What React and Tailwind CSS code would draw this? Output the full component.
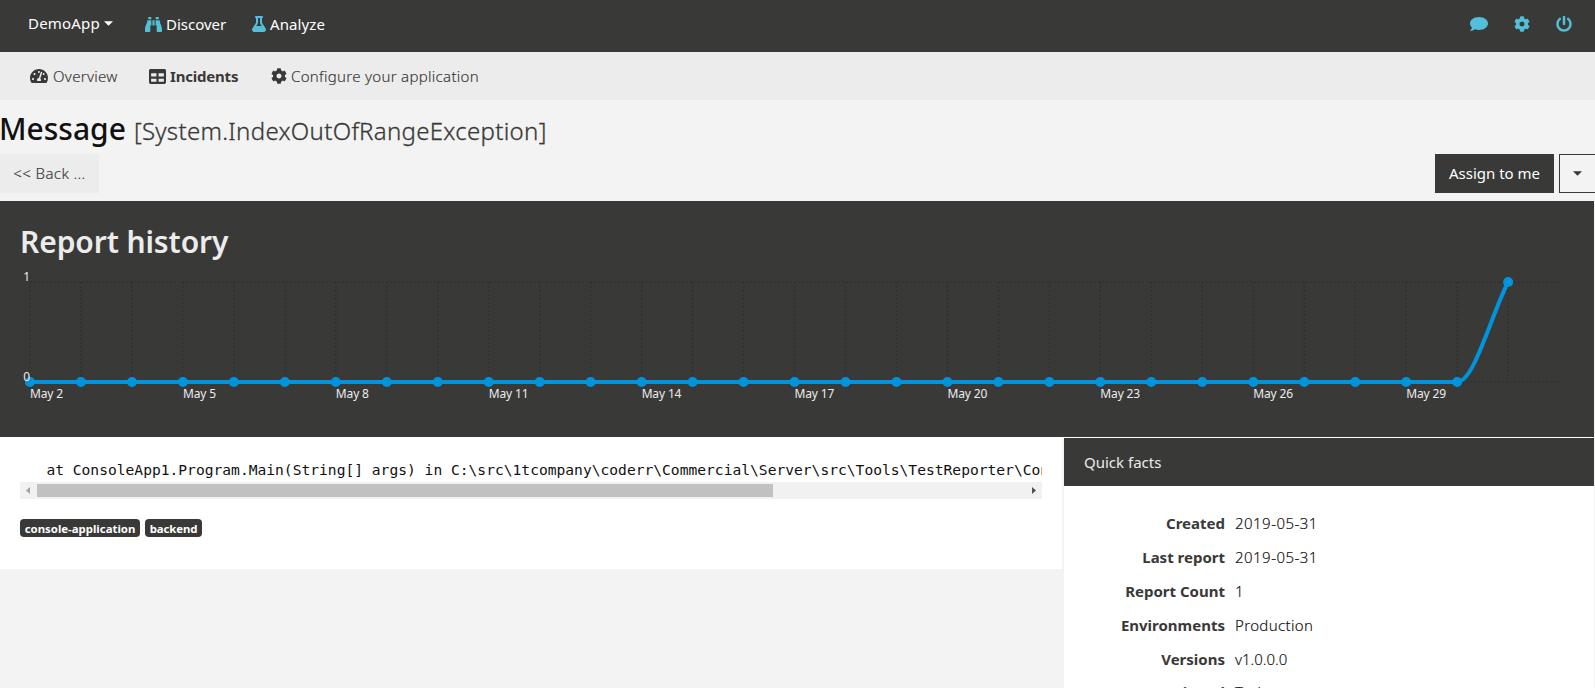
import {
  FaBinoculars,
  FaFlask,
  FaTachometerAlt,
  FaTable,
  FaCog,
  FaPowerOff,
} from "react-icons/fa";

const STEP = 50.97;
const LEFT = 30;
const TOP = 81;
const BOTTOM = 181;
const xs = Array.from({ length: 30 }, (_, i) => LEFT + i * STEP);

const labels = [
  "May 2", "May 5", "May 8", "May 11", "May 14",
  "May 17", "May 20", "May 23", "May 26", "May 29",
];

const facts = [
  ["Created", "2019-05-31", "tracking-[0.47px]"],
  ["Last report", "2019-05-31", "tracking-[0.47px]"],
  ["Report Count", "1", ""],
  ["Environments", "Production", "tracking-[0.35px]"],
  ["Versions", "v1.0.0.0", ""],
  ["Assigned", "Today", "tracking-[0.6px]"],
];

function Caret({ className = "" }) {
  return (
    <svg className={className} width="9" height="5" viewBox="0 0 9 5" fill="currentColor">
      <path d="M0 .3h9L4.5 4.8z" />
    </svg>
  );
}

function Comment() {
  return (
    <svg width="18" height="16" viewBox="0 0 576 512" fill="currentColor">
      <path d="M576 240c0 114.9-129 208-288 208-48.3 0-93.9-8.6-133.9-23.8-40.3 31.2-89.8 50.3-142.4 55.7-5.2.6-10.2-2.8-11.5-7.7-1.3-5 2.7-8.1 6.6-11.8 19.3-18.4 42.7-32.8 51.9-94.6C21.9 330.9 0 287.3 0 240 0 125.1 129 32 288 32s288 93.1 288 208z" />
    </svg>
  );
}

function Chart() {
  const lastX = xs[29];
  const prevX = xs[28];
  const third = STEP / 3;
  return (
    <svg className="absolute inset-0" width="1594" height="236" viewBox="0 0 1594 236">
      <g stroke="#2f2f2d" strokeWidth="1.2" strokeDasharray="2 2">
        {xs.map((x) => (
          <line key={x} x1={x} x2={x} y1={TOP} y2={BOTTOM} />
        ))}
        <line x1={LEFT} x2="1559" y1="81" y2="81" />
        <line x1={LEFT} x2="1559" y1="181" y2="181" />
      </g>
      <path
        d={`M${LEFT} ${BOTTOM}H${prevX}C${prevX + third} ${BOTTOM} ${lastX - third} ${TOP + 33} ${lastX} ${TOP}`}
        fill="none"
        stroke="#0094de"
        strokeWidth="4"
      />
      {xs.map((x, i) => (
        <circle key={x} cx={x} cy={i === 29 ? TOP : BOTTOM} r="5" fill="#0094de" />
      ))}
      <g fill="#ececec" fontSize="12" fontFamily="Noto Sans, sans-serif">
        <text x="23.3" y="80">1</text>
        <text x="23.3" y="180">0</text>
        {labels.map((l, i) => (
          <text key={l} x={LEFT + i * 3 * STEP} y="197" letterSpacing="-0.15">
            {l}
          </text>
        ))}
      </g>
    </svg>
  );
}

export default function App() {
  return (
    <div className="h-[688px] w-[1595px] overflow-hidden bg-[#f3f3f3] font-['Noto_Sans',sans-serif] text-[15px] leading-6 text-[#393937]">
      <nav className="flex h-[52px] items-start bg-[#393937] pt-[12px] pl-[28px] text-white">
        <div className="-mt-px flex w-[117px] items-center whitespace-nowrap tracking-[0.2px]">
          DemoApp
          <Caret className="ml-[4px]" />
        </div>
        <div className="flex w-[106px] items-center">
          <FaBinoculars size={17} className="mr-[4px] shrink-0 text-[#53bfd8]" />
          Discover
        </div>
        <div className="flex items-center tracking-[0.1px]">
          <FaFlask size={16} className="mr-[3px] shrink-0 text-[#53bfd8]" />
          Analyze
        </div>
        <div className="mr-[23px] ml-auto flex h-6 items-center gap-[26px] text-[#53bfd8]">
          <Comment />
          <FaCog size={16} />
          <FaPowerOff size={16} />
        </div>
      </nav>

      <div className="flex h-[48px] items-center bg-[#ececec] pl-[30px] font-light">
        <div className="flex w-[119px] items-center tracking-[0.3px] [-webkit-text-stroke:0.15px]">
          <FaTachometerAlt size={18} className="mr-[5px] shrink-0" />
          Overview
        </div>
        <div className="flex w-[122px] items-center font-bold tracking-[-0.2px]">
          <FaTable size={17} className="mr-[4px] shrink-0" />
          Incidents
        </div>
        <div className="flex items-center tracking-[0.3px] [-webkit-text-stroke:0.15px]">
          <FaCog size={16} className="mr-[4px] shrink-0" />
          Configure your application
        </div>
      </div>

      <div className="flex h-[54px] items-baseline pt-[3px] leading-[51px]">
        <h1 className="-ml-px text-[30px] leading-[51px] font-medium text-[#111]">Message</h1>
        <span className="ml-[8px] text-[24px] leading-[51px] font-light tracking-[0.3px] [-webkit-text-stroke:0.3px]">
          [System.IndexOutOfRangeException]
        </span>
      </div>

      <div className="flex h-[47px] items-start">
        <div className="flex h-[39px] w-[99px] items-center justify-center bg-[#ececec] pb-[2px] font-light tracking-[0.4px] [-webkit-text-stroke:0.15px]">
          {"<< Back ..."}
        </div>
        <div className="ml-auto flex h-[39px] w-[119px] items-center justify-center bg-[#393937] pb-[2px] text-white">
          Assign to me
        </div>
        <div className="ml-[5px] flex h-[39px] w-[36px] items-center justify-center border border-r-0 border-[#393937]">
          <Caret />
        </div>
      </div>

      <section className="relative h-[236px] w-[1594px] bg-[#393937] pt-[21px] pl-[20px]">
        <h2 className="text-[30px] leading-[40px] font-semibold tracking-[-0.1px] text-[#ececec]">
          Report history
        </h2>
        <Chart />
      </section>

      <div className="flex w-[1594px] items-start justify-between border-t border-white">
        <section className="h-[131px] w-[1062px] bg-white px-[20px] pt-[21px]">
          <pre className="h-[23px] w-[1022px] overflow-hidden font-['DejaVu_Sans_Mono',monospace] text-[14.61px] leading-[22px] text-[#111]">
            {"   at ConsoleApp1.Program.Main(String[] args) in C:\\src\\1tcompany\\coderr\\Commercial\\Server\\src\\Tools\\TestReporter\\Con"}
          </pre>
          <div className="flex h-[17px] w-[1022px] items-center bg-[#f1f1f1]">
            <svg width="17" height="17" viewBox="0 0 17 17" fill="#a3a3a3">
              <path d="M10 5v7L6 8.5z" />
            </svg>
            <div className="h-[13px] w-[736px] bg-[#c1c1c1]" />
            <svg className="ml-auto" width="17" height="17" viewBox="0 0 17 17" fill="#505050">
              <path d="M7 5v7l4-3.5z" />
            </svg>
          </div>
          <div className="mt-[20px] flex gap-[5px] text-[11.4px] leading-[19px] font-bold text-white">
            <span className="h-[18px] w-[120px] rounded-[4px] bg-[#393937] text-center">console-application</span>
            <span className="h-[18px] w-[57px] rounded-[4px] bg-[#393937] text-center tracking-[-0.1px]">backend</span>
          </div>
        </section>

        <aside className="h-[250px] w-[530px] bg-white">
          <div className="flex h-[48px] items-center bg-[#393937] pl-[20px] text-[#ececec]">Quick facts</div>
          <dl className="pt-[20px]">
            {facts.map(([k, v, t]) => (
              <div key={k} className="flex h-[34px] items-center last:-mt-px">
                <dt className="w-[161px] text-right font-bold">{k}</dt>
                <dd className={`ml-[10px] font-light text-[#111] [-webkit-text-stroke:0.15px] ${t}`}>{v}</dd>
              </div>
            ))}
          </dl>
        </aside>
      </div>
    </div>
  );
}
